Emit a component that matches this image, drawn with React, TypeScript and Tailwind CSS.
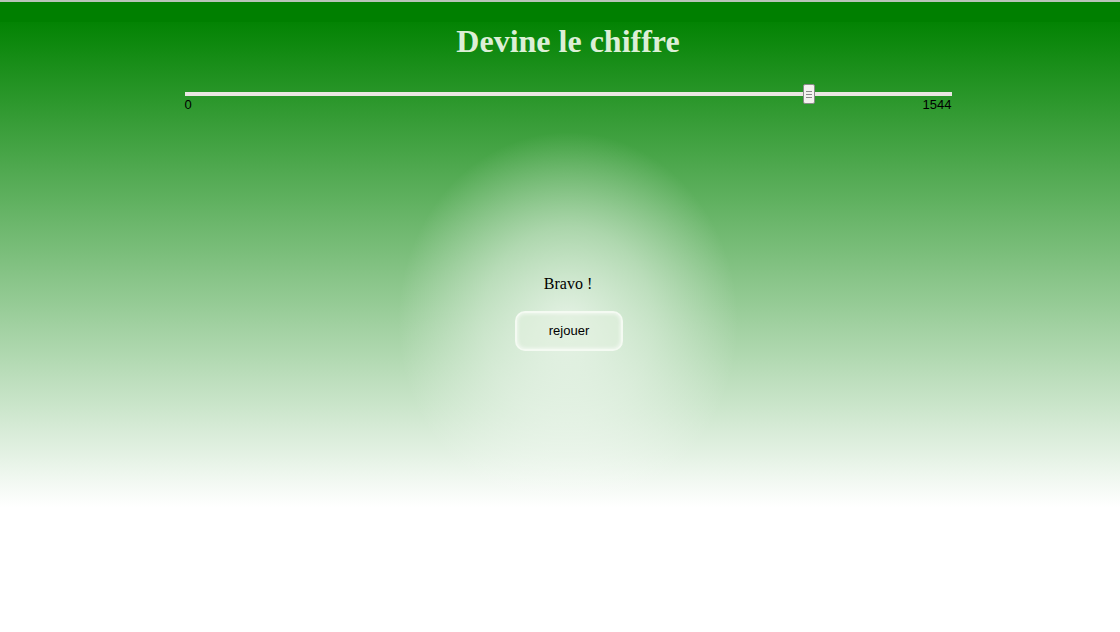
import { useState } from 'react';

export default function App() {
  const [value, setValue] = useState(1258);
  const max = 1544;
  const pct = (value / max) * 100;

  return (
    <div className="relative min-h-[632px] w-full overflow-hidden bg-white">
      <div className="h-[2px] bg-[#b8c4b8]" />
      <div className="h-[20px] bg-[#007f00]" />
      <div className="h-[485px] bg-[linear-gradient(to_bottom,#038303,#ffffff)]" />

      {/* glow behind the result */}
      <div className="pointer-events-none absolute left-[398px] top-[132px] h-[380px] w-[340px] rounded-full bg-[radial-gradient(closest-side,rgba(255,255,255,0.72),rgba(255,255,255,0.42)_50%,rgba(255,255,255,0))]" />

      <div className="absolute inset-x-0 top-0 flex flex-col items-center pl-4">
        <h1 className="mt-[21px] text-[32px] font-bold leading-[40px] text-[#dcefd6] [font-family:'Liberation_Serif',serif]">
          Devine le chiffre
        </h1>

        <div className="mt-[23px] w-[767px]">
          <div className="relative h-[20px]">
            <div className="absolute inset-x-0 top-[8px] h-[4px] bg-[#ebe7e3]" />
            <div
              className="absolute top-0 flex h-[20px] w-[12px] -translate-x-1/2 flex-col items-center justify-center gap-[2px] rounded-[2px] border border-[#8a8a8a] bg-[#f4f2f0]"
              style={{ left: `${pct}%` }}
            >
              <span className="h-px w-[6px] bg-[#8a8a8a]" />
              <span className="h-px w-[6px] bg-[#8a8a8a]" />
              <span className="h-px w-[6px] bg-[#8a8a8a]" />
            </div>
            <input
              type="range"
              min={0}
              max={max}
              value={value}
              onChange={(e) => setValue(Number(e.target.value))}
              className="absolute inset-0 h-full w-full cursor-pointer opacity-0"
            />
          </div>
          <div className="-mt-[7px] flex justify-between text-[13px] leading-[15px] text-black [font-family:'Liberation_Sans',sans-serif]">
            <span>0</span>
            <span>1544</span>
          </div>
        </div>

        <p className="mt-[162px] text-[16px] leading-[20px] text-black [font-family:'Liberation_Serif',serif]">Bravo !</p>

        <button className="ml-[2px] mt-[17px] h-[40px] w-[108px] rounded-[10px] border-2 border-[#f4faf2] bg-[rgba(225,240,222,0.55)] text-[13px] text-black shadow-[inset_0_0_4px_rgba(255,255,255,0.9)] [font-family:'Liberation_Sans',sans-serif]">
          rejouer
        </button>
      </div>
    </div>
  );
}
